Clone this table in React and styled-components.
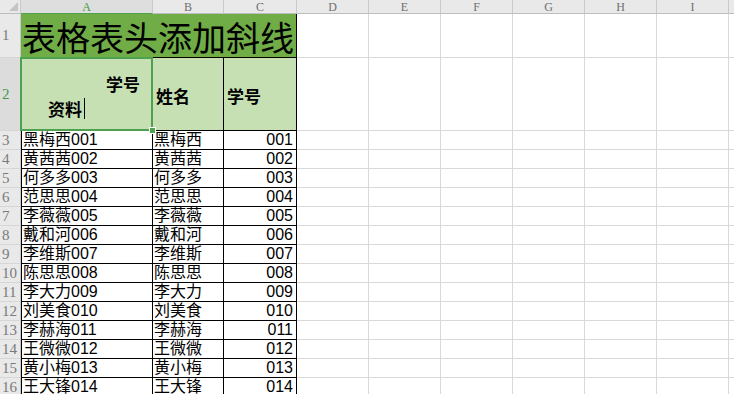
import React from "react";
import styled, { createGlobalStyle } from "styled-components";

const GlobalStyle = createGlobalStyle`
  html, body {
    margin: 0;
    padding: 0;
    background: #fff;
    overflow: hidden;
  }
  body {
    font-family: "Liberation Sans", "Noto Sans CJK SC", sans-serif;
  }
`;

const COLS = [21, 132, 71, 73, 72, 72, 72, 72, 72, 72, 72];
const LETTERS = ["A", "B", "C", "D", "E", "F", "G", "H", "I", "J"];
const GREEN = "#4ea24f";

const rows = [
  ["黑梅西", "001"],
  ["黄茜茜", "002"],
  ["何多多", "003"],
  ["范思思", "004"],
  ["李薇薇", "005"],
  ["戴和河", "006"],
  ["李维斯", "007"],
  ["陈思思", "008"],
  ["李大力", "009"],
  ["刘美食", "010"],
  ["李赫海", "011"],
  ["王微微", "012"],
  ["黄小梅", "013"],
  ["王大锋", "014"],
];

const Sheet = styled.div`
  display: grid;
  grid-template-columns: ${COLS.map((w) => w + "px").join(" ")};
  grid-template-rows: 14px 44px 73px repeat(14, 19px);
  width: max-content;
`;

const Corner = styled.div`
  position: relative;
  background: #e9e9e9;
  border-right: 1px solid #c9c9c9;
  border-bottom: 1px solid #bdbdbd;

  &::after {
    content: "";
    position: absolute;
    right: 2px;
    bottom: 2px;
    border-style: solid;
    border-width: 0 0 9px 9px;
    border-color: transparent transparent #c4c4c4 transparent;
  }
`;

const ColHead = styled.div`
  display: flex;
  align-items: center;
  justify-content: center;
  overflow: hidden;
  background: ${(p) => (p.$active ? "#dedede" : "#e9e9e9")};
  border-right: 1px solid #c9c9c9;
  border-bottom: 1px solid ${(p) => (p.$active ? GREEN : "#bdbdbd")};
  font-family: "Liberation Serif", serif;
  font-size: 12px;
  line-height: 12px;
  color: ${(p) => (p.$active ? "#3f9a45" : "#6f6f6f")};
`;

const RowHead = styled.div`
  display: flex;
  align-items: center;
  padding-left: 2px;
  background: ${(p) => (p.$active ? "#dcdcdc" : "#e9e9e9")};
  border-right: 1px solid ${(p) => (p.$active ? GREEN : "#c9c9c9")};
  border-bottom: 1px solid #d6d6d6;
  font-family: "Liberation Serif", serif;
  font-size: 15px;
  line-height: 17px;
  color: ${(p) => (p.$active ? "#3f9a45" : "#7a7a7a")};
`;

const Cell = styled.div`
  display: flex;
  align-items: flex-end;
  justify-content: ${(p) => (p.$right ? "flex-end" : "flex-start")};
  padding: ${(p) => (p.$right ? "0 3px 0 0" : "0 0 0 1px")};
  background: ${(p) => p.$bg || "#fff"};
  border-right: 1px solid ${(p) => (p.$edge ? "#000" : "#d9d9d9")};
  border-bottom: 1px solid ${(p) => (p.$edge ? "#000" : "#d9d9d9")};
  border-left: ${(p) => (p.$lead ? "1px solid #000" : "none")};
  font-size: 16px;
  line-height: 18px;
  color: #000;
  white-space: nowrap;
  overflow: hidden;
`;

const Title = styled.div`
  grid-column: span 3;
  display: flex;
  align-items: flex-end;
  padding: 0 0 2px 1px;
  background: #70ad47;
  border-right: 1px solid #000;
  border-bottom: 1px solid #000;
  font-family: "Noto Sans CJK SC", sans-serif;
  font-size: 34px;
  line-height: 36px;
  color: #000;
  white-space: nowrap;
`;

const HeadCell = styled.div`
  display: flex;
  align-items: center;
  padding: 2px 0 0 3px;
  background: #c6e0b4;
  border-right: 1px solid #000;
  border-bottom: 1px solid #000;
  font-family: "Noto Sans CJK SC", sans-serif;
  font-weight: 700;
  font-size: 17px;
`;

const SplitCell = styled.div`
  position: relative;
  display: flex;
  flex-direction: column;
  justify-content: center;
  padding-top: 4px;
  background: #c6e0b4;
  border-right: 1px solid #000;
  border-bottom: 1px solid #000;
  font-family: "Noto Sans CJK SC", sans-serif;
  font-weight: 700;
  font-size: 17px;
  line-height: 25px;

  &::after {
    content: "";
    position: absolute;
    inset: -1px;
    border: 2px solid ${GREEN};
    pointer-events: none;
    z-index: 2;
  }
`;

const SplitLine = styled.div`
  display: flex;
  justify-content: ${(p) => (p.$right ? "flex-end" : "flex-start")};
  align-items: center;
  padding: ${(p) => (p.$right ? "0 12px 0 0" : "0 0 0 27px")};
`;

const Caret = styled.span`
  display: inline-block;
  width: 1px;
  height: 21px;
  margin-left: 2px;
  background: #000;
`;

const Handle = styled.span`
  position: absolute;
  right: -4px;
  bottom: -4px;
  width: 5px;
  height: 5px;
  background: ${GREEN};
  border: 1px solid #fff;
  z-index: 3;
`;

const Blank = ({ n }) =>
  Array.from({ length: n }).map((_, i) => <Cell key={"b" + i} />);

export default function App() {
  return (
    <>
      <GlobalStyle />
      <Sheet>
        <Corner />
        {LETTERS.map((l) => (
          <ColHead key={l} $active={l === "A"}>
            {l}
          </ColHead>
        ))}

        <RowHead>1</RowHead>
        <Title>表格表头添加斜线</Title>
        <Blank n={7} />

        <RowHead $active>2</RowHead>
        <SplitCell>
          <SplitLine $right>学号</SplitLine>
          <SplitLine>
            资料
            <Caret />
          </SplitLine>
          <Handle />
        </SplitCell>
        <HeadCell>姓名</HeadCell>
        <HeadCell>学号</HeadCell>
        <Blank n={7} />

        {rows.map(([name, no], i) => (
          <React.Fragment key={no}>
            <RowHead>{i + 3}</RowHead>
            <Cell $edge $lead>
              {name}
              {no}
            </Cell>
            <Cell $edge>{name}</Cell>
            <Cell $edge $right>
              {no}
            </Cell>
            <Blank n={7} />
          </React.Fragment>
        ))}
      </Sheet>
    </>
  );
}
